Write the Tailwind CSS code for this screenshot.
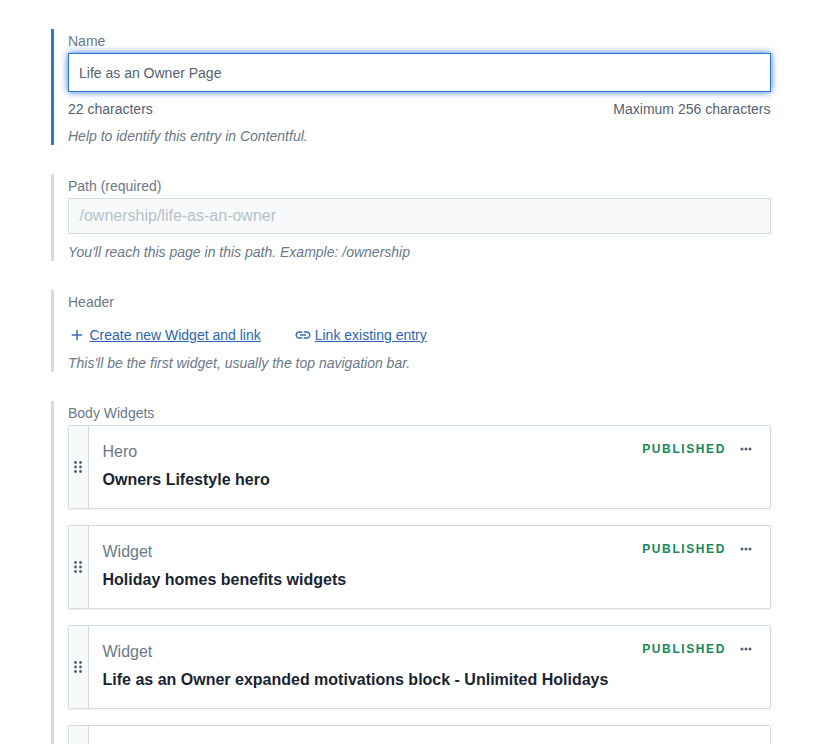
<!DOCTYPE html>
<html lang="en">
<head>
<meta charset="utf-8">
<title>Entry editor</title>
<script src="https://cdn.jsdelivr.net/npm/@tailwindcss/browser@4"></script>
</head>
<body class="bg-white overflow-hidden h-[744px] font-['Liberation_Sans',Arial,sans-serif] text-[14px] text-[#536171]">
<main class="h-[744px] overflow-hidden pl-[51px] pr-[63px] pt-[29px] flex flex-col gap-[29px]">

  <section class="shrink-0 border-l-[3px] border-[#2e75d4] pl-[14px] h-[116px]">
    <label class="block h-[24px] leading-[24px] text-[#6a7889]">Name</label>
    <input value="Life as an Owner Page" class="block w-full h-[39px] px-[10px] bg-white border border-[#2e75d4] shadow-[0_0_7px_#2e75d4] text-[14px] text-[#536171] outline-none">
    <div class="flex justify-between mt-[7px] pr-[0.5px] h-[20px] leading-[20px]"><span>22 characters</span><span>Maximum 256 characters</span></div>
    <p class="mt-[7px] leading-[20px] italic text-[#6a7889]">Help to identify this entry in Contentful.</p>
  </section>

  <section class="shrink-0 border-l-[3px] border-[#d3dce0] pl-[14px] h-[87px]">
    <label class="block h-[24px] leading-[24px] text-[#6a7889]">Path (required)</label>
    <div class="h-[36px] px-[10.5px] bg-[#f7f9fa] border border-[#d3dce0] leading-[34px] text-[16px] text-[#b4c3ca]">/ownership/life-as-an-owner</div>
    <p class="mt-[8px] leading-[20px] italic text-[#6a7889]">You'll reach this page in this path. Example: /ownership</p>
  </section>

  <section class="shrink-0 border-l-[3px] border-[#d3dce0] pl-[14px] h-[82px]">
    <label class="block h-[24px] leading-[24px] text-[#6a7889]">Header</label>
    <div class="flex items-center mt-[11px] h-[20px] leading-[20px]">
      <svg class="mr-[3.5px] w-[18px] h-[18px]" viewBox="0 0 24 24" fill="#3c6fb5" aria-hidden="true"><path d="M19 13h-6v6h-2v-6H5v-2h6V5h2v6h6v2z"/></svg>
      <a href="#" class="underline text-[#2d64b3]">Create new Widget and link</a>
      <svg class="ml-[33px] mr-[3px] w-[18px] h-[18px]" viewBox="0 0 24 24" fill="#3c6fb5" aria-hidden="true"><path d="M3.9 12c0-1.71 1.39-3.1 3.1-3.1h4V7H7c-2.76 0-5 2.24-5 5s2.24 5 5 5h4v-1.9H7c-1.71 0-3.1-1.39-3.1-3.1zM8 13h8v-2H8v2zm9-6h-4v1.9h4c1.71 0 3.1 1.39 3.1 3.1s-1.39 3.1-3.1 3.1h-4V17h4c2.76 0 5-2.24 5-5s-2.24-5-5-5z"/></svg>
      <a href="#" class="underline text-[#2d64b3]">Link existing entry</a>
    </div>
    <p class="mt-[8px] leading-[20px] italic text-[#6a7889]">This'll be the first widget, usually the top navigation bar.</p>
  </section>

  <section class="shrink-0 border-l-[3px] border-[#d3dce0] pl-[14px]">
    <label class="block h-[24px] leading-[24px] text-[#6a7889]">Body Widgets</label>
    <ul class="flex flex-col gap-[16px]">
      <li class="flex h-[84px] bg-white rounded-[2px] border border-[#d3dce0] shadow-[0_1px_2px_rgba(25,37,50,0.08)]">
        <div class="w-[20px] shrink-0 pl-[5px] bg-[#f7f9fa] border-r border-[#d3dce0] flex items-center">
          <svg class="w-[8px] h-[12px]" viewBox="0 0 8 12" fill="#536171" aria-hidden="true"><circle cx="1.5" cy="1.5" r="1.4"/><circle cx="6.5" cy="1.5" r="1.4"/><circle cx="1.5" cy="6" r="1.4"/><circle cx="6.5" cy="6" r="1.4"/><circle cx="1.5" cy="10.5" r="1.4"/><circle cx="6.5" cy="10.5" r="1.4"/></svg>
        </div>
        <div class="flex-1 pl-[13.5px] pr-[18px] pt-[15px]">
          <div class="flex justify-between h-[20px]">
            <span class="text-[16px] leading-[22px] text-[#6a7889]">Hero</span>
            <span class="flex items-start">
              <span class="text-[12px] leading-[16px] font-bold tracking-[1.6px] text-[#16875d]">PUBLISHED</span>
              <svg class="ml-[14px] mt-[6px] w-[12px] h-[4px]" viewBox="0 0 12 4" fill="#536171" aria-hidden="true"><circle cx="2" cy="2" r="1.5"/><circle cx="6" cy="2" r="1.5"/><circle cx="10" cy="2" r="1.5"/></svg>
            </span>
          </div>
          <div class="mt-[8px] text-[16px] leading-[22px] font-bold text-[#192532]">Owners Lifestyle hero</div>
        </div>
      </li>
      <li class="flex h-[84px] bg-white rounded-[2px] border border-[#d3dce0] shadow-[0_1px_2px_rgba(25,37,50,0.08)]">
        <div class="w-[20px] shrink-0 pl-[5px] bg-[#f7f9fa] border-r border-[#d3dce0] flex items-center">
          <svg class="w-[8px] h-[12px]" viewBox="0 0 8 12" fill="#536171" aria-hidden="true"><circle cx="1.5" cy="1.5" r="1.4"/><circle cx="6.5" cy="1.5" r="1.4"/><circle cx="1.5" cy="6" r="1.4"/><circle cx="6.5" cy="6" r="1.4"/><circle cx="1.5" cy="10.5" r="1.4"/><circle cx="6.5" cy="10.5" r="1.4"/></svg>
        </div>
        <div class="flex-1 pl-[13.5px] pr-[18px] pt-[15px]">
          <div class="flex justify-between h-[20px]">
            <span class="text-[16px] leading-[22px] text-[#6a7889]">Widget</span>
            <span class="flex items-start">
              <span class="text-[12px] leading-[16px] font-bold tracking-[1.6px] text-[#16875d]">PUBLISHED</span>
              <svg class="ml-[14px] mt-[6px] w-[12px] h-[4px]" viewBox="0 0 12 4" fill="#536171" aria-hidden="true"><circle cx="2" cy="2" r="1.5"/><circle cx="6" cy="2" r="1.5"/><circle cx="10" cy="2" r="1.5"/></svg>
            </span>
          </div>
          <div class="mt-[8px] text-[16px] leading-[22px] font-bold text-[#192532]">Holiday homes benefits widgets</div>
        </div>
      </li>
      <li class="flex h-[84px] bg-white rounded-[2px] border border-[#d3dce0] shadow-[0_1px_2px_rgba(25,37,50,0.08)]">
        <div class="w-[20px] shrink-0 pl-[5px] bg-[#f7f9fa] border-r border-[#d3dce0] flex items-center">
          <svg class="w-[8px] h-[12px]" viewBox="0 0 8 12" fill="#536171" aria-hidden="true"><circle cx="1.5" cy="1.5" r="1.4"/><circle cx="6.5" cy="1.5" r="1.4"/><circle cx="1.5" cy="6" r="1.4"/><circle cx="6.5" cy="6" r="1.4"/><circle cx="1.5" cy="10.5" r="1.4"/><circle cx="6.5" cy="10.5" r="1.4"/></svg>
        </div>
        <div class="flex-1 pl-[13.5px] pr-[18px] pt-[15px]">
          <div class="flex justify-between h-[20px]">
            <span class="text-[16px] leading-[22px] text-[#6a7889]">Widget</span>
            <span class="flex items-start">
              <span class="text-[12px] leading-[16px] font-bold tracking-[1.6px] text-[#16875d]">PUBLISHED</span>
              <svg class="ml-[14px] mt-[6px] w-[12px] h-[4px]" viewBox="0 0 12 4" fill="#536171" aria-hidden="true"><circle cx="2" cy="2" r="1.5"/><circle cx="6" cy="2" r="1.5"/><circle cx="10" cy="2" r="1.5"/></svg>
            </span>
          </div>
          <div class="mt-[8px] text-[16px] leading-[22px] font-bold text-[#192532]">Life as an Owner expanded motivations block - Unlimited Holidays</div>
        </div>
      </li>
      <li class="flex h-[84px] bg-white rounded-[2px] border border-[#d3dce0]">
        <div class="w-[20px] shrink-0 bg-[#f7f9fa] border-r border-[#d3dce0]"></div>
      </li>
    </ul>
  </section>
</main>
</body>
</html>
